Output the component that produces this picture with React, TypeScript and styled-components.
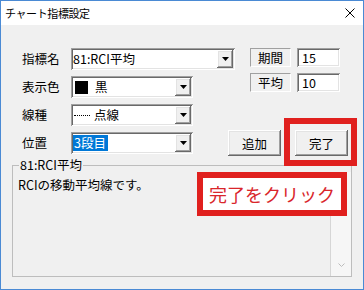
import React from 'react';
import styled, { createGlobalStyle } from 'styled-components';

const GlobalStyle = createGlobalStyle`
  html, body {
    margin: 0;
    padding: 0;
    background: #ffffff;
  }
  body {
    font-family: "Noto Sans CJK JP", "Noto Sans", sans-serif;
  }
`;

const raised = `
  box-shadow: inset -1px -1px #696969, inset 1px 1px #ffffff,
    inset -2px -2px #a0a0a0, inset 2px 2px #e3e3e3;
`;

const sunken = `
  box-shadow: inset 1px 1px #a0a0a0, inset -1px -1px #ffffff,
    inset 2px 2px #696969, inset -2px -2px #e3e3e3;
`;

const Window = styled.div`
  position: relative;
  width: 364px;
  height: 290px;
  box-sizing: border-box;
  border: 1px solid #4a8ad4;
  background: #f0f0f0;
  display: flex;
  flex-direction: column;
  font-size: 12.5px;
  color: #000;
`;

const TitleBar = styled.div`
  height: 24px;
  background: #ffffff;
  display: flex;
  align-items: center;
  justify-content: space-between;
  padding: 0 8px 0 4px;
`;

const Title = styled.span`
  font-size: 11px;
  letter-spacing: -0.4px;
  line-height: 14px;
`;

const Body = styled.div`
  flex: 1;
  display: flex;
  flex-direction: column;
  padding-top: 23px;
`;

const Upper = styled.div`
  display: flex;
  gap: 15px;
  padding-left: 21px;
`;

const LeftCol = styled.div`
  display: flex;
  flex-direction: column;
  gap: 6px;
`;

const FieldRow = styled.div`
  display: flex;
  align-items: center;
  height: 22px;
`;

const Label = styled.span`
  width: 49px;
  line-height: 16px;
`;

const Combo = styled.div<{ $width: number }>`
  width: ${(p) => p.$width}px;
  height: 22px;
  box-sizing: border-box;
  background: #ffffff;
  ${sunken}
  display: flex;
  align-items: center;
  padding: 0 2px;
`;

const ComboValue = styled.div`
  flex: 1;
  display: flex;
  align-items: center;
  line-height: 16px;
  white-space: nowrap;
`;

const ColorSwatch = styled.span`
  width: 13px;
  height: 13px;
  margin: 0 7px 0 2px;
  background: #000;
`;

const DottedSample = styled.span`
  width: 16px;
  margin: 1px 4px 0 1px;
  border-top: 1px dotted #000;
`;

const Selected = styled.span`
  background: #0078d7;
  color: #ffffff;
  padding: 0 2px 0 1px;
  height: 16px;
`;

const DropButton = styled.div`
  width: 16px;
  height: 18px;
  background: #f0f0f0;
  ${raised}
  display: flex;
  align-items: center;
  justify-content: center;
`;

const Params = styled.div`
  display: flex;
  flex-direction: column;
  gap: 6px;
`;

const ParamRow = styled.div`
  display: flex;
  gap: 6px;
  height: 19px;
`;

const ParamLabel = styled.div`
  width: 41px;
  box-sizing: border-box;
  border-top: 1px solid #a0a0a0;
  border-left: 1px solid #a0a0a0;
  border-bottom: 1px solid #ffffff;
  border-right: 1px solid #ffffff;
  display: flex;
  align-items: center;
  justify-content: center;
`;

const ParamInput = styled.div`
  width: 43px;
  box-sizing: border-box;
  background: #ffffff;
  ${sunken}
  display: flex;
  align-items: center;
  padding-left: 5px;
`;

const Lower = styled.div`
  display: flex;
  align-items: center;
  height: 26px;
  margin-top: 4px;
  padding-left: 21px;
`;

const Button = styled.button`
  width: 53px;
  height: 26px;
  border: none;
  padding: 0;
  background: #f0f0f0;
  ${raised}
  font: inherit;
  color: #000;
`;

const Slot = styled.span<{ $gap: number }>`
  position: relative;
  display: flex;
  margin-left: ${(p) => p.$gap}px;
`;

const MarkFrame = styled.span`
  position: absolute;
  top: -12px;
  right: -9px;
  bottom: -10px;
  left: -11px;
  border: 6px solid #e0201e;
  pointer-events: none;
`;

const GroupBox = styled.fieldset`
  flex: 1;
  margin: 2px 11px 12px;
  padding: 0;
  border: 1px solid #bdbdbd;
  display: flex;
  flex-direction: column;
  min-width: 0;
`;

const Legend = styled.legend`
  margin-left: 6px;
  padding: 0 1px;
  line-height: 14px;
`;

const Desc = styled.div`
  flex: 1;
  display: flex;
`;

const DescText = styled.div`
  flex: 1;
  padding: 5px 0 0 5px;
  line-height: 16px;
`;

const ScrollStrip = styled.div`
  width: 20px;
  border-left: 1px solid #d6d6d6;
  background: #f6f6f6;
  display: flex;
  flex-direction: column;
  justify-content: flex-end;
  align-items: center;
  padding-bottom: 9px;
`;

const Callout = styled.div`
  position: absolute;
  left: 196px;
  top: 171px;
  width: 150px;
  height: 44px;
  box-sizing: border-box;
  border: 6px solid #e0201e;
  background: #ffffff;
  color: #d9262b;
  font-size: 18px;
  display: flex;
  align-items: center;
  justify-content: center;
`;

function Arrow() {
  return (
    <svg width="7" height="4" viewBox="0 0 7 4">
      <path d="M0 0H7L3.5 4Z" fill="#000" />
    </svg>
  );
}

function Select({ width, children }: { width: number; children: React.ReactNode }) {
  return (
    <Combo $width={width}>
      <ComboValue>{children}</ComboValue>
      <DropButton>
        <Arrow />
      </DropButton>
    </Combo>
  );
}

export default function App() {
  return (
    <>
      <GlobalStyle />
      <Window>
        <TitleBar>
          <Title>チャート指標設定</Title>
          <svg width="10" height="10" viewBox="0 0 10 10">
            <path d="M0.5 0.5L9.5 9.5M9.5 0.5L0.5 9.5" stroke="#000" strokeWidth="1" />
          </svg>
        </TitleBar>
        <Body>
          <Upper>
            <LeftCol>
              <FieldRow>
                <Label>指標名</Label>
                <Select width={164}>81:RCI平均</Select>
              </FieldRow>
              <FieldRow>
                <Label>表示色</Label>
                <Select width={122}>
                  <ColorSwatch />黒
                </Select>
              </FieldRow>
              <FieldRow>
                <Label>線種</Label>
                <Select width={122}>
                  <DottedSample />点線
                </Select>
              </FieldRow>
            </LeftCol>
            <Params>
              <ParamRow>
                <ParamLabel>期間</ParamLabel>
                <ParamInput>15</ParamInput>
              </ParamRow>
              <ParamRow>
                <ParamLabel>平均</ParamLabel>
                <ParamInput>10</ParamInput>
              </ParamRow>
            </Params>
          </Upper>
          <Lower>
            <Label>位置</Label>
            <Select width={122}>
              <Selected>3段目</Selected>
            </Select>
            <Slot $gap={35}>
              <Button>追加</Button>
            </Slot>
            <Slot $gap={14}>
              <Button>完了</Button>
              <MarkFrame />
            </Slot>
          </Lower>
          <GroupBox>
            <Legend>81:RCI平均</Legend>
            <Desc>
              <DescText>RCIの移動平均線です。</DescText>
              <ScrollStrip>
                <svg width="7" height="4" viewBox="0 0 7 4">
                  <path d="M0.5 0.5L3.5 3.5L6.5 0.5" stroke="#bcbcbc" fill="none" />
                </svg>
              </ScrollStrip>
            </Desc>
          </GroupBox>
        </Body>
        <Callout>完了をクリック</Callout>
      </Window>
    </>
  );
}
